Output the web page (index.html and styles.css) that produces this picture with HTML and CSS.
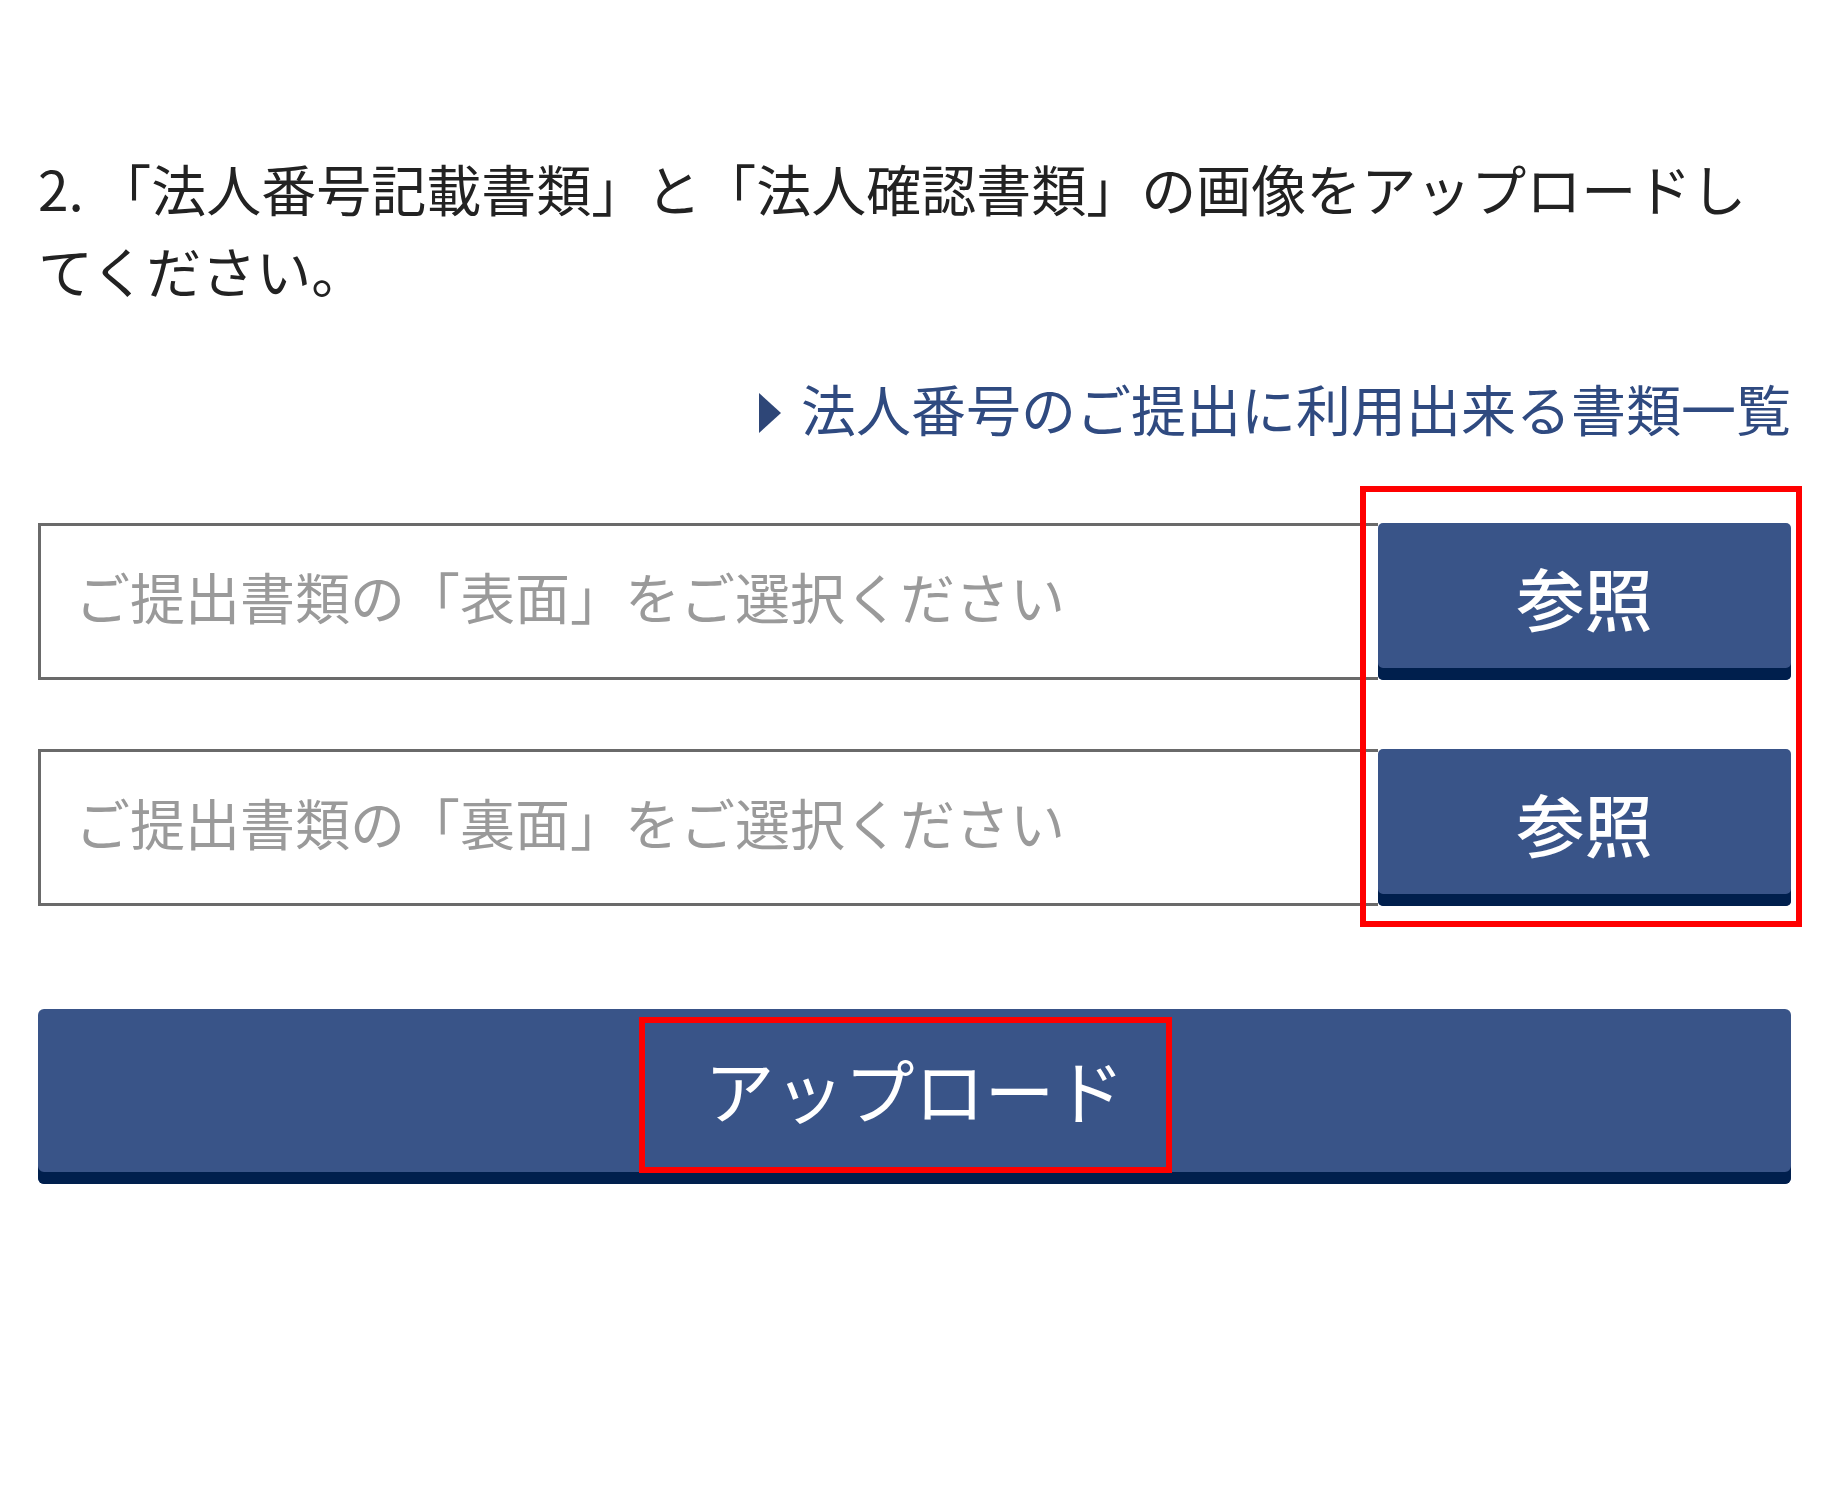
FILE: index.html
```html
<!DOCTYPE html>
<html lang="ja">
<head>
<meta charset="utf-8">
<title>アップロード</title>
<link rel="stylesheet" href="styles.css">
</head>
<body>
<div class="container">
  <p class="heading">2. 「法人番号記載書類」と「法人確認書類」の画像をアップロードしてください。</p>
  <div class="link-row">
    <a class="doc-link" href="#"><svg class="tri" width="22" height="40" viewBox="0 0 22 40"><polygon points="0,0 22,20 0,40" fill="#2e4677"/></svg>法人番号のご提出に利用出来る書類一覧</a>
  </div>
  <div class="file-row">
    <input class="file-input" type="text" placeholder="ご提出書類の「表面」をご選択ください">
    <button class="browse-btn" type="button">参照</button>
  </div>
  <div class="file-row second">
    <input class="file-input" type="text" placeholder="ご提出書類の「裏面」をご選択ください">
    <button class="browse-btn" type="button">参照</button>
  </div>
  <button class="upload-btn" type="button">アップロード</button>
  <div class="mark mark-browse"></div>
  <div class="mark mark-upload"></div>
</div>
</body>
</html>
```
FILE: styles.css
```css
html, body {
  margin: 0;
  padding: 0;
  background: #ffffff;
}

body {
  font-family: "Noto Sans CJK JP", "Noto Sans", sans-serif;
  color: #222222;
}

.container {
  position: relative;
  margin-left: 38px;
  width: 1753px;
  padding-top: 146px;
  padding-bottom: 300px;
}

.heading {
  margin: 0;
  padding-right: 20px;
  font-size: 55px;
  line-height: 82px;
  color: #222222;
}

.link-row {
  margin-top: 56px;
  text-align: right;
  font-size: 55px;
  line-height: 82px;
}

.doc-link {
  color: #2f4a80;
  text-decoration: none;
}

.tri {
  display: inline-block;
  vertical-align: -2px;
  margin-right: 20px;
}

.file-row {
  display: flex;
  margin-top: 75px;
  height: 157px;
}

.file-row.second {
  margin-top: 69px;
}

.file-input {
  flex: 1;
  min-width: 0;
  box-sizing: border-box;
  height: 157px;
  margin: 0;
  border: 3px solid #6a6a6a;
  border-right: none;
  border-radius: 0;
  padding: 0 0 14px 34px;
  font-family: "Noto Sans CJK JP", "Noto Sans", sans-serif;
  font-size: 55px;
  color: #333333;
  background: #ffffff;
  outline: none;
}

.file-input::placeholder {
  color: #9a9a9a;
}

.browse-btn {
  width: 413px;
  height: 157px;
  margin: 0;
  border: none;
  border-radius: 5px;
  padding: 0 0 10px 0;
  background: #395488;
  box-shadow: inset 0 -12px 0 #001f4d;
  color: #ffffff;
  font-family: "Noto Sans CJK JP", "Noto Sans", sans-serif;
  font-size: 68px;
  font-weight: 500;
  cursor: pointer;
}

.upload-btn {
  display: block;
  width: 100%;
  height: 175px;
  margin: 103px 0 0 0;
  border: none;
  border-radius: 6px;
  padding: 0 0 16px 0;
  background: #395488;
  box-shadow: inset 0 -12px 0 #001f4d;
  color: #ffffff;
  font-family: "Noto Sans CJK JP", "Noto Sans", sans-serif;
  font-size: 70px;
  font-weight: 400;
  cursor: pointer;
}

.mark {
  position: absolute;
  box-sizing: border-box;
  border: 6px solid #ff0000;
  pointer-events: none;
}

.mark-browse {
  left: 1322px;
  top: 486px;
  width: 442px;
  height: 441px;
}

.mark-upload {
  left: 601px;
  top: 1017px;
  width: 533px;
  height: 156px;
}
```
